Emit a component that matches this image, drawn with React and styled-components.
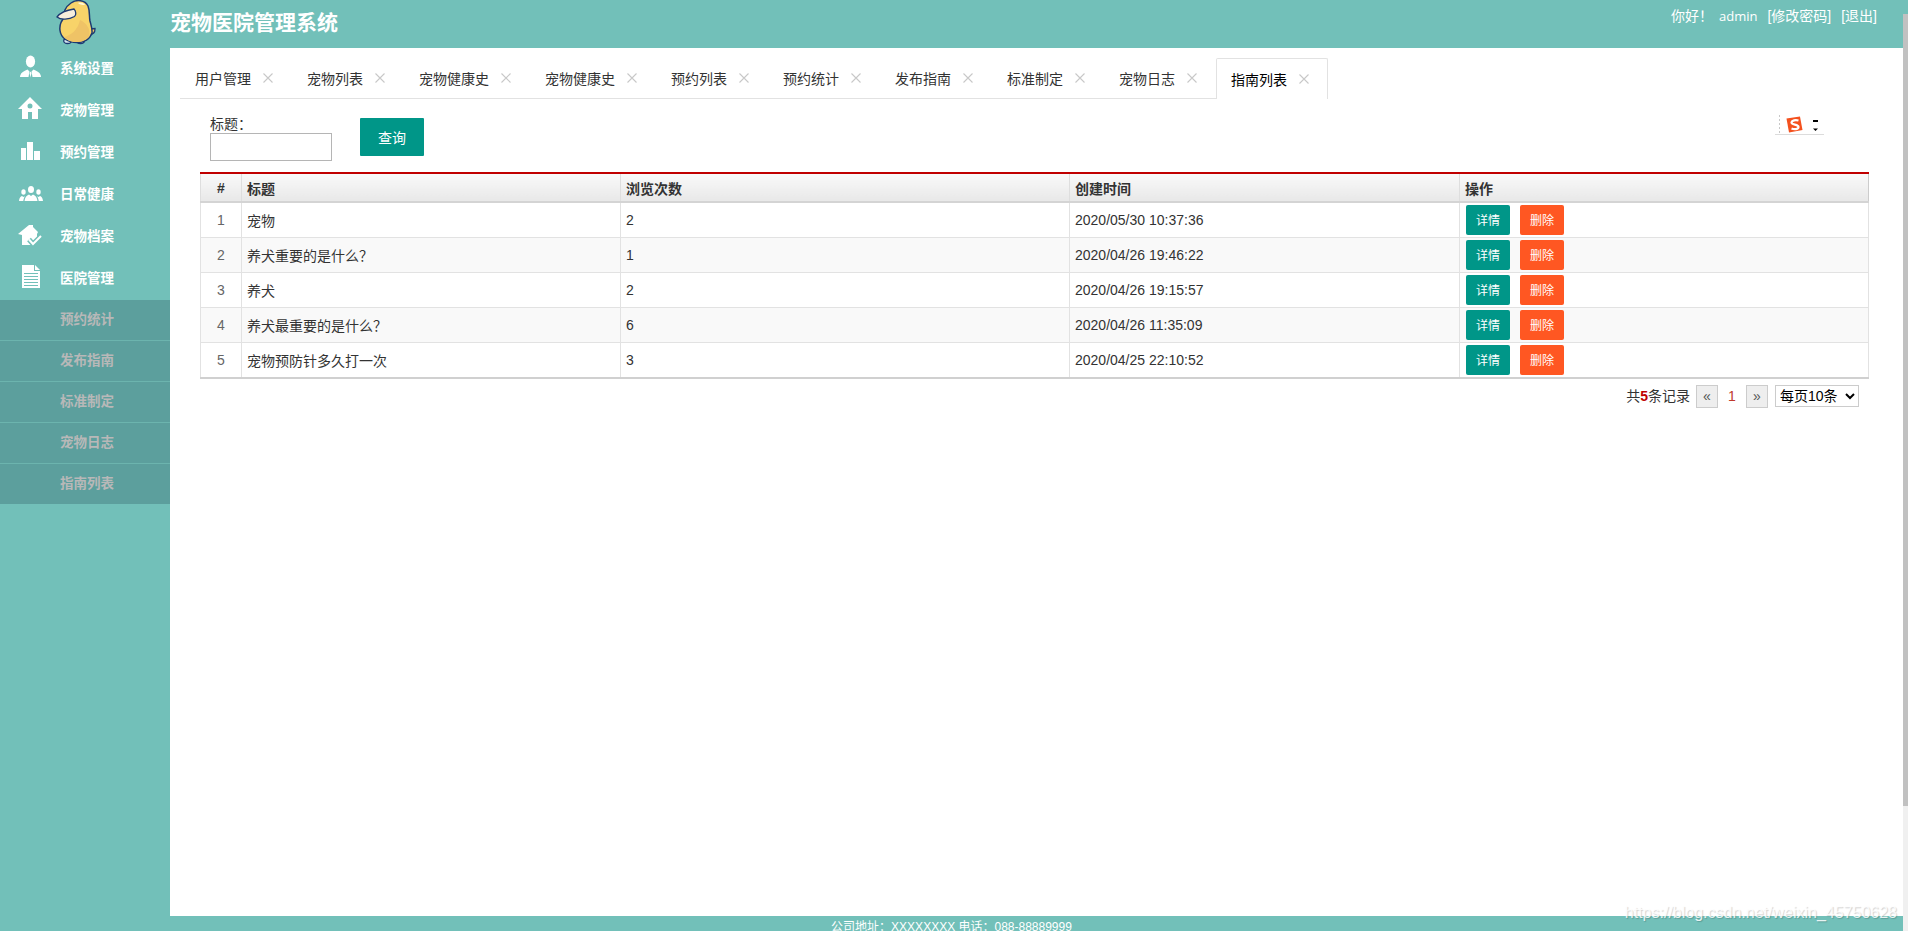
import React from "react";
import styled, { createGlobalStyle } from "styled-components";

const teal = "#72c0b9";
const cjk = `"Liberation Sans", "Noto Sans CJK SC", sans-serif`;

const tabs = [
  "用户管理",
  "宠物列表",
  "宠物健康史",
  "宠物健康史",
  "预约列表",
  "预约统计",
  "发布指南",
  "标准制定",
  "宠物日志",
  "指南列表",
];

const subMenu = ["预约统计", "发布指南", "标准制定", "宠物日志", "指南列表"];

const rows = [
  ["1", "宠物", "2", "2020/05/30 10:37:36"],
  ["2", "养犬重要的是什么？", "1", "2020/04/26 19:46:22"],
  ["3", "养犬", "2", "2020/04/26 19:15:57"],
  ["4", "养犬最重要的是什么？", "6", "2020/04/26 11:35:09"],
  ["5", "宠物预防针多久打一次", "3", "2020/04/25 22:10:52"],
];

const UserIcon = () => (
  <IconSvg viewBox="0 0 32 32">
    <ellipse cx="16.5" cy="10.5" rx="4.6" ry="6" />
    <path d="M6 26c.3-4 3-5.6 7.500-7.500l2 2-1 5.500z" />
    <path d="M27 26c-.3-4-3-5.600-7.500-7.500l-2 2 1 5.500z" />
    <path d="M16.500 20.500l-1 1.500 1 4.500 1-4.500z" />
  </IconSvg>
);

const HomeIcon = () => (
  <IconSvg viewBox="0 0 32 32">
    <path
      fillRule="evenodd"
      d="M16 4L4 16h4v10h6v-7h4v7h6V16h4zM16 10.500a2.500 2.500 0 1 1 0 5 2.500 2.500 0 0 1 0-5z"
    />
  </IconSvg>
);

const BarsIcon = () => (
  <IconSvg viewBox="0 0 32 32">
    <rect x="7" y="13" width="5" height="12" />
    <rect x="13" y="7" width="6" height="18" />
    <rect x="20" y="16" width="6" height="9" />
  </IconSvg>
);

const UsersIcon = () => (
  <IconSvg viewBox="0 0 32 32">
    <ellipse cx="17" cy="12.500" rx="3" ry="3.600" />
    <path d="M10.500 24c.3-3.500 2-5.500 4.500-6.500l2 1.500 2-1.500c2.500 1 4.200 3 4.500 6.500z" />
    <ellipse cx="9.500" cy="15" rx="2.200" ry="2.800" />
    <path d="M5 24c.2-3 1.600-4.500 3-5l1.500 1 1.500-.8c-1 1.300-1.500 2.800-1.700 4.800z" />
    <ellipse cx="24.500" cy="15" rx="2.200" ry="2.800" />
    <path d="M29 24c-.2-3-1.600-4.500-3-5l-1.500 1-1.500-.8c1 1.300 1.500 2.800 1.700 4.800z" />
  </IconSvg>
);

const HouseCheckIcon = () => (
  <IconSvg viewBox="0 0 32 32">
    <path d="M4 15L15 6h4v2l5 5-1 2v6l-5 5H8V16z" />
    <path d="M15 20.500l4 4.500 8-8" fill="none" stroke={teal} strokeWidth="5" />
    <path d="M15 20.500l4 4.500 8-8" fill="none" stroke="#fff" strokeWidth="2" />
  </IconSvg>
);

const DocIcon = () => (
  <IconSvg viewBox="0 0 32 32">
    <path d="M8 4h12v6h6v17H8z" />
    <path d="M21 4l5 5h-5z" />
    <path
      d="M10 12.500h14M10 15.500h14M10 18.500h14M10 21.500h14M10 24.500h14"
      stroke={teal}
      strokeWidth="1.200"
    />
  </IconSvg>
);

const menu = [
  ["系统设置", UserIcon],
  ["宠物管理", HomeIcon],
  ["预约管理", BarsIcon],
  ["日常健康", UsersIcon],
  ["宠物档案", HouseCheckIcon],
  ["医院管理", DocIcon],
];

const Duck = () => (
  <svg width="40" height="45" viewBox="0 0 40 45">
    <ellipse cx="11.500" cy="41" rx="3.800" ry="2.500" fill="#d7e6f2" stroke="#1d3a72" strokeWidth="1.300" />
    <ellipse cx="24.500" cy="41" rx="3.800" ry="2.500" fill="#d7e6f2" stroke="#1d3a72" strokeWidth="1.300" />
    <path
      d="M34 29l5-.5c.2 3.500-2 6-5.500 6.500z"
      fill="#f4ca63"
      stroke="#1d3a72"
      strokeWidth="1.300"
    />
    <path
      d="M15 3c6-4 14-3 17 3 2 5 1 10 2 15 1 4 2.500 8 2 12-2 6-8 9.500-15 9.500-9 0-16-4-17-12-.8-6 1.500-10 4.500-13C7 13 9 7 15 3z"
      fill="#f8d369"
      stroke="#1d3a72"
      strokeWidth="1.500"
    />
    <path d="M24 20c7 3 11 10 9 16-2 4-7 6-12 6-6 0-10-2-13-5 6-1 14-7 16-17z" fill="#efc366" />
    <path d="M22 3c3-1 6 0 7 2-2 0-5 0-7-2z" fill="#fff6d8" />
    <path
      d="M1 17c3-4 10-7 17-8 2 2 2.500 6 .5 7.500C13 19.500 5 20.500 1 17z"
      fill="#f7eedc"
      stroke="#1d3a72"
      strokeWidth="1.300"
    />
  </svg>
);

const CloseIcon = () => (
  <CloseSvg viewBox="0 0 10 10">
    <path d="M.5.5l9 9M9.500.5l-9 9" />
  </CloseSvg>
);

const App = () => (
  <Page>
    <GlobalStyle />
    <Upper>
      <Sidebar>
        <LogoBox>
          <Duck />
        </LogoBox>
        {menu.map(([label, Icon]) => (
          <MenuItem key={label}>
            <Icon />
            {label}
          </MenuItem>
        ))}
        <SubList>
          {subMenu.map((label) => (
            <SubItem key={label}>{label}</SubItem>
          ))}
        </SubList>
      </Sidebar>
      <Main>
        <Header>
          <Title>宠物医院管理系统</Title>
          <UserBar>
            <Greeting>你好！</Greeting>
            <AdminName>admin</AdminName>
            <span>[修改密码]</span>
            <span>[退出]</span>
          </UserBar>
        </Header>
        <Content>
          <TabBar>
            {tabs.map((tab, i) => (
              <Tab key={i} $active={i === tabs.length - 1}>
                {tab}
                <CloseIcon />
              </Tab>
            ))}
          </TabBar>
          <SearchForm>
            <Field>
              标题：
              <TextInput type="text" />
            </Field>
            <SearchButton>查询</SearchButton>
          </SearchForm>
          <SogouBar>
            <svg width="49" height="20" viewBox="0 0 49 20">
              <path d="M4.500 0v20" stroke="#c8c8c8" strokeDasharray="2 2" />
              <path d="M0 19.500h49" stroke="#dcdcdc" />
              <path d="M11.500 3.500l13.500-2 2.500 13.500-13.500 2.500z" fill="#f4511e" />
              <path
                d="M23.500 5.500c-3-.8-6.500-.2-7 1.800-.5 3 7 1.700 7 4.700 0 2.200-4 2.800-7 1.500"
                fill="none"
                stroke="#fff"
                strokeWidth="2.200"
              />
              <rect x="38" y="5" width="5" height="2" fill="#000" />
              <path d="M38 13.500h5l-2.500 2.500z" fill="#000" />
            </svg>
          </SogouBar>
          <TableWrap>
            <DataTable>
              <colgroup>
                <col width="41" />
                <col width="379" />
                <col width="449" />
                <col width="390" />
                <col />
              </colgroup>
              <thead>
                <tr>
                  <NumHead>#</NumHead>
                  <HeadCell>标题</HeadCell>
                  <HeadCell>浏览次数</HeadCell>
                  <HeadCell>创建时间</HeadCell>
                  <HeadCell>操作</HeadCell>
                </tr>
              </thead>
              <tbody>
                {rows.map((row) => (
                  <Row key={row[0]}>
                    <NumCell>{row[0]}</NumCell>
                    <Cell>{row[1]}</Cell>
                    <Cell>{row[2]}</Cell>
                    <Cell>{row[3]}</Cell>
                    <ActionCell>
                      <ActionButton>详情</ActionButton>
                      <ActionButton $danger>删除</ActionButton>
                    </ActionCell>
                  </Row>
                ))}
              </tbody>
            </DataTable>
          </TableWrap>
          <Pager>
            <PagerTotal>
              共<Total>5</Total>条记录
            </PagerTotal>
            <PageLink>«</PageLink>
            <CurrentPage>1</CurrentPage>
            <PageLink>»</PageLink>
            <PageSize defaultValue="10">
              <option value="10">每页10条</option>
            </PageSize>
          </Pager>
        </Content>
      </Main>
    </Upper>
    <Footer>公司地址：XXXXXXXX 电话：088-88889999</Footer>
    <Watermark>https://blog.csdn.net/weixin_45750628</Watermark>
    <ScrollTrack>
      <ScrollThumb />
    </ScrollTrack>
  </Page>
);

export default App;

const GlobalStyle = createGlobalStyle`
  html, body {
    margin: 0;
    padding: 0;
    overflow: hidden;
  }
  body {
    font-family: ${cjk};
    font-size: 14px;
    color: #333;
  }
`;

const Page = styled.div`
  position: relative;
  display: flex;
  flex-direction: column;
  height: 100vh;
  overflow: hidden;
  background: ${teal};
`;

const Upper = styled.div`
  flex: 1;
  display: flex;
  min-height: 0;
`;

const Sidebar = styled.aside`
  width: 170px;
  flex-shrink: 0;
`;

const LogoBox = styled.div`
  height: 46px;
  padding-left: 56px;
  overflow: hidden;
`;

const MenuItem = styled.div`
  display: flex;
  align-items: center;
  gap: 14px;
  height: 42px;
  padding-left: 14px;
  color: #fff;
  font-size: 13.5px;
  font-weight: bold;
`;

const IconSvg = styled.svg`
  width: 32px;
  height: 32px;
  fill: #fff;
`;

const SubList = styled.div`
  margin-top: 2px;
`;

const SubItem = styled.div`
  height: 40px;
  line-height: 39px;
  padding-left: 60px;
  background: #5c9f9d;
  border-bottom: 1px solid #6cb4ae;
  color: #b8b8b8;
  font-size: 13.5px;
  font-weight: bold;

  &:last-child {
    border-bottom: none;
  }
`;

const Main = styled.main`
  flex: 1;
  display: flex;
  flex-direction: column;
  min-width: 0;
`;

const Header = styled.header`
  height: 48px;
  flex-shrink: 0;
  display: flex;
  justify-content: space-between;
  align-items: flex-start;
  padding-right: 31px;
  color: #fff;
`;

const Title = styled.h1`
  margin: 8px 0 0;
  font-size: 21px;
  line-height: 30px;
  font-weight: bold;
`;

const UserBar = styled.div`
  display: flex;
  gap: 10px;
  margin-top: 6px;
  font-size: 14px;
  line-height: 20px;
`;

const Greeting = styled.span`
  margin-right: -4px;
`;

const AdminName = styled.span`
  font-family: "Open Sans", sans-serif;
  font-size: 13px;
`;

const Content = styled.div`
  position: relative;
  flex: 1;
  background: #fff;
  padding: 10px 5px 0 10px;
`;

const TabBar = styled.div`
  display: flex;
  height: 41px;
`;

const Tab = styled.div`
  display: flex;
  align-items: center;
  height: 41px;
  box-sizing: border-box;
  gap: 12px;
  padding: ${(p) => (p.$active ? "0 18px 1px 14px" : "0 19px 1px 15px")};
  color: ${(p) => (p.$active ? "#000" : "#333")};
  border: ${(p) => (p.$active ? "1px solid #e2e2e2" : "none")};
  border-bottom: none;
  border-radius: ${(p) => (p.$active ? "2px 2px 0 0" : "0")};
  box-shadow: ${(p) => (p.$active ? "none" : "inset 0 -1px 0 #e2e2e2")};
`;

const CloseSvg = styled.svg`
  width: 10px;
  height: 10px;
  stroke: #c8c8c8;
  stroke-width: 1.100;
  fill: none;
`;

const SearchForm = styled.div`
  display: flex;
  align-items: flex-start;
  gap: 28px;
  padding: 16px 0 11px 30px;
`;

const Field = styled.label`
  display: block;
  line-height: 18px;
`;

const TextInput = styled.input`
  display: block;
  box-sizing: border-box;
  width: 122px;
  height: 28px;
  padding: 0 4px;
  border: 1px solid #b5b5b5;
  border-radius: 0;
  outline: none;
`;

const SearchButton = styled.button`
  width: 64px;
  height: 38px;
  margin-top: 3px;
  border: none;
  border-radius: 1px;
  background: #009688;
  color: #fff;
  font-family: inherit;
  font-size: 14px;
`;

const SogouBar = styled.div`
  position: absolute;
  top: 67px;
  right: 84px;
  line-height: 0;
`;

const TableWrap = styled.div`
  margin: 0 34px 0 20px;
`;

const DataTable = styled.table`
  width: 100%;
  table-layout: fixed;
  border-collapse: collapse;
  border: 1px solid #ccc;
  border-top: 2px solid #c00000;
  border-bottom: 2px solid #d0d0d0;
  font-size: 14px;
  color: #333;
`;

const HeadCell = styled.th`
  height: 27px;
  padding: 0 5px;
  text-align: left;
  font-weight: bold;
  background: linear-gradient(#f9f9f9, #e8e8e8);
  border-left: 1px solid #dedede;
  border-bottom: 2px solid #d4d4d4;
`;

const NumHead = styled(HeadCell)`
  text-align: center;
`;

const Row = styled.tr`
  height: 35px;
  &:nth-child(even) {
    background: #f9f9f9;
  }
  &:last-child {
    height: 36px;
  }
`;

const Cell = styled.td`
  padding: 0 5px;
  border: 1px solid #e2e2e2;
`;

const NumCell = styled(Cell)`
  text-align: center;
  color: #666;
`;

const ActionCell = styled(Cell)`
  padding: 0 0 0 6px;
  font-size: 0;
`;

const ActionButton = styled.button`
  width: 44px;
  height: 30px;
  padding: 0;
  margin-right: 10px;
  border: none;
  border-radius: 2px;
  background: ${(p) => (p.$danger ? "#ff5722" : "#009688")};
  color: #fff;
  font-family: inherit;
  font-size: 12px;
  vertical-align: middle;
`;

const Pager = styled.div`
  display: flex;
  justify-content: flex-end;
  align-items: flex-start;
  height: 23px;
  margin: 6px 44px 0 0;
  color: #333;
`;

const PagerTotal = styled.span`
  line-height: 22px;
`;

const Total = styled.b`
  color: #c00000;
`;

const PageLink = styled.span`
  box-sizing: border-box;
  width: 22px;
  height: 23px;
  margin-left: 6px;
  line-height: 20px;
  text-align: center;
  background: #eeeeee;
  border: 1px solid #ccc;
  color: #555;
`;

const CurrentPage = styled.span`
  width: 16px;
  margin-left: 6px;
  line-height: 22px;
  text-align: center;
  color: #c0392b;
`;

const PageSize = styled.select`
  width: 84px;
  height: 22px;
  margin-left: 7px;
  padding: 0;
  border: 1px solid #ccc;
  border-radius: 0;
  background: #fff;
  color: #000;
  font-family: inherit;
  font-size: 14px;
`;

const Footer = styled.footer`
  height: 15px;
  flex-shrink: 0;
  overflow: hidden;
  padding: 2px 5px 0 0;
  box-sizing: border-box;
  text-align: center;
  color: #fff;
  font-size: 12px;
  line-height: 18px;
`;

const Watermark = styled.div`
  position: absolute;
  right: 11px;
  bottom: 9px;
  font-size: 16px;
  line-height: 18px;
  color: rgba(255, 255, 255, 0.85);
  text-shadow: 1px 1px 1px rgba(0, 0, 0, 0.18);
`;

const ScrollTrack = styled.div`
  position: absolute;
  top: 14px;
  right: 0;
  bottom: 0;
  width: 5px;
  background: #f0f0f0;
`;

const ScrollThumb = styled.div`
  height: 792px;
  background: #c1c1c1;
`;
